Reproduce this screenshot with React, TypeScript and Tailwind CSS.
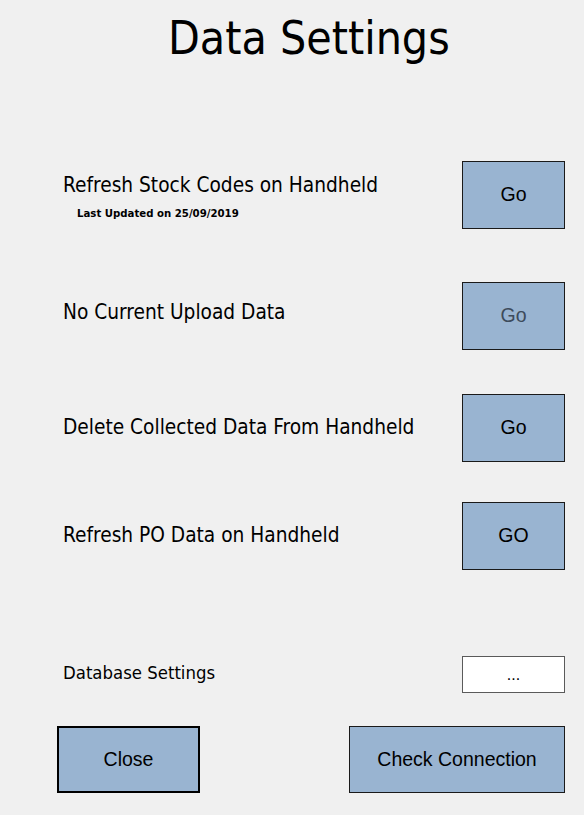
const label = "font-['DejaVu_Sans_Condensed','DejaVu_Sans',sans-serif] font-stretch-condensed text-black"
const btn =
  "flex items-center justify-center bg-[#99b4d1] border border-[#1a1a1a] font-['Liberation_Sans',Arial,sans-serif] text-[19.5px]"

type Row = { text: string; go: string; top: string; labelTop: string; disabled?: boolean; note?: string }

const rows: Row[] = [
  { text: "Refresh Stock Codes on Handheld", go: "Go", top: "mt-[95px]", labelTop: "mt-[12px]", note: "Last Updated on 25/09/2019" },
  { text: "No Current Upload Data", go: "Go", top: "mt-[53px]", labelTop: "mt-[18px]", disabled: true },
  { text: "Delete Collected Data From Handheld", go: "Go", top: "mt-[44px]", labelTop: "mt-[21px]" },
  { text: "Refresh PO Data on Handheld", go: "GO", top: "mt-[40px]", labelTop: "mt-[21px]" },
]

export default function App() {
  return (
    <div className="w-[584px] h-[815px] bg-[#f0f0f0] flex flex-col overflow-hidden">
      <h1 className={`${label} text-[46px] leading-[56px] pl-[168px] pt-[10px]`}>Data Settings</h1>

      {rows.map((r) => (
        <div key={r.text} className={`flex justify-between pl-[63px] pr-[19px] ${r.top}`}>
          <div className={`flex flex-col ${r.labelTop}`}>
            <span className={`${label} text-[20.7px] leading-[24px]`}>{r.text}</span>
            {r.note && (
              <span className={`${label} text-[11.3px] leading-[14px] font-bold pl-[14px] mt-[10px]`}>{r.note}</span>
            )}
          </div>
          <button className={`${btn} w-[103px] h-[68px] ${r.disabled ? "text-[#3d4b5b]" : "text-black"}`}>{r.go}</button>
        </div>
      ))}

      <div className="flex justify-between items-center pl-[63px] pr-[19px] mt-[86px]">
        <span className={`${label} text-[18.4px] leading-[22px] -mt-[3px]`}>Database Settings</span>
        <button className="w-[103px] h-[37px] bg-white border border-[#5a5a5a] flex items-center justify-center font-['Liberation_Sans',Arial,sans-serif] text-[16px] text-black">
          ...
        </button>
      </div>

      <div className="flex justify-between pl-[57px] pr-[19px] mt-[33px]">
        <button className={`${btn} text-black w-[143px] h-[67px] border-2 border-black`}>Close</button>
        <button className={`${btn} text-black w-[216px] h-[67px]`}>Check Connection</button>
      </div>
    </div>
  )
}
